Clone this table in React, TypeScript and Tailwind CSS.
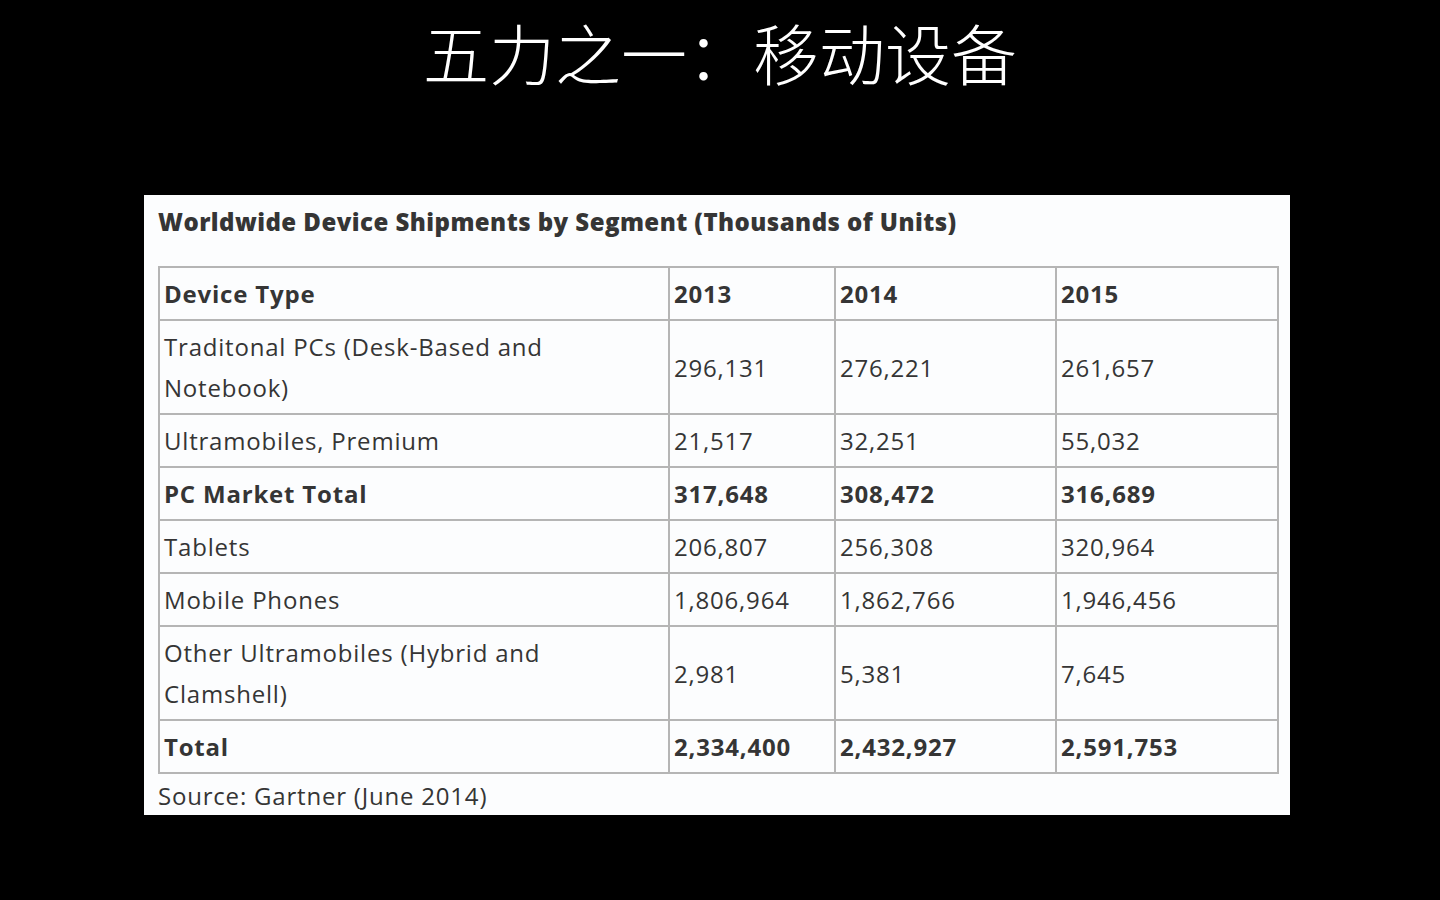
import React from "react";

const rows = [
  { name: "Traditonal PCs (Desk-Based and Notebook)", v: ["296,131", "276,221", "261,657"], bold: false },
  { name: "Ultramobiles, Premium", v: ["21,517", "32,251", "55,032"], bold: false },
  { name: "PC Market Total", v: ["317,648", "308,472", "316,689"], bold: true },
  { name: "Tablets", v: ["206,807", "256,308", "320,964"], bold: false },
  { name: "Mobile Phones", v: ["1,806,964", "1,862,766", "1,946,456"], bold: false },
  { name: "Other Ultramobiles (Hybrid and Clamshell)", v: ["2,981", "5,381", "7,645"], bold: false },
  { name: "Total", v: ["2,334,400", "2,432,927", "2,591,753"], bold: true },
];

const cell = "border-2 border-[#b5b5b5] pl-[4px] pr-1 pt-[5px] pb-[5px] align-middle";

export default function App() {
  return (
    <div className="w-[1440px] h-[900px] bg-black flex flex-col overflow-hidden">
      <h1 className="mt-[11px] self-center text-[66px] leading-[80px] text-white font-light font-['Noto_Sans_CJK_SC',sans-serif]">
        五力之一：移动设备
      </h1>
      <div className="mt-[104px] ml-[144px] w-[1146px] h-[620px] bg-[#fcfdfe] pl-[14px] pr-[13px] pt-[12px] font-['Open_Sans',sans-serif] text-[#353535] tracking-[0.8px]">
        <div className="text-[24px] leading-[30px] font-extrabold tracking-[0.45px]">
          Worldwide Device Shipments by Segment (Thousands of Units)
        </div>
        <table className="mt-[29px] w-[1119px] table-fixed border-collapse text-[24px] leading-[41px]">
          <colgroup>
            <col className="w-[510px]" />
            <col className="w-[166px]" />
            <col className="w-[221px]" />
            <col className="w-[222px]" />
          </colgroup>
          <thead>
            <tr className="font-bold">
              <td className={cell}>Device Type</td>
              <td className={cell}>2013</td>
              <td className={cell}>2014</td>
              <td className={cell}>2015</td>
            </tr>
          </thead>
          <tbody>
            {rows.map((r) => (
              <tr key={r.name} className={r.bold ? "font-bold" : ""}>
                <td className={cell + " pr-[100px]"}>{r.name}</td>
                {r.v.map((x, i) => (
                  <td key={i} className={cell}>{x}</td>
                ))}
              </tr>
            ))}
          </tbody>
        </table>
        <div className="mt-[2px] text-[24px] leading-[40px]">Source: Gartner (June 2014)</div>
      </div>
    </div>
  );
}
